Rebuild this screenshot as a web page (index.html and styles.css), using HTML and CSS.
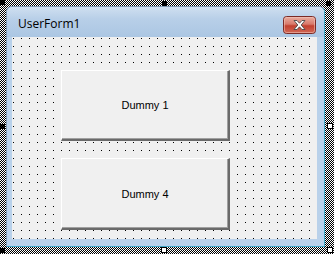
FILE: index.html
```html
<!DOCTYPE html>
<html>
<head>
<meta charset="utf-8">
<link rel="stylesheet" href="styles.css">
</head>
<body>
<div class="sel">
  <div class="form">
    <div class="titlebar">
      <span class="title">UserForm1</span>
      <span class="close">
        <svg width="33" height="18" viewBox="0 0 33 18">
          <defs>
            <linearGradient id="cg" x1="0" y1="0" x2="0" y2="1">
              <stop offset="0" stop-color="#eab0a3"/>
              <stop offset="0.45" stop-color="#d8796b"/>
              <stop offset="0.55" stop-color="#c2402f"/>
              <stop offset="1" stop-color="#d26a58"/>
            </linearGradient>
          </defs>
          <rect x="0.5" y="0.5" width="32" height="17" rx="3" fill="url(#cg)" stroke="#7a2a26"/>
          <rect x="1.5" y="1.5" width="30" height="15" rx="2" fill="none" stroke="#f3c6bc" stroke-opacity="0.55"/>
          <path d="M11 4.5 L14 4.5 L16.5 7.2 L19 4.5 L22 4.5 L18.2 9 L22 13.5 L19 13.5 L16.5 10.8 L14 13.5 L11 13.5 L14.8 9 Z" fill="#ffffff" stroke="#474747" stroke-width="0.9" stroke-linejoin="round"/>
        </svg>
      </span>
    </div>
    <div class="client">
      <div class="btn b1">Dummy 1</div>
      <div class="btn b2">Dummy 4</div>
    </div>
  </div>
  <span class="h blk tl"></span>
  <span class="h blk tm"></span>
  <span class="h blk tr"></span>
  <span class="h blk lm"></span>
  <span class="h blk bl"></span>
  <span class="h wht rm"></span>
  <span class="h wht bm"></span>
  <span class="h wht br"></span>
</div>
</body>
</html>
```
FILE: styles.css
```css
html, body {
  margin: 0;
  padding: 0;
  background: #ffffff;
}
.sel {
  position: relative;
  width: 334px;
  height: 254px;
  box-sizing: border-box;
  padding: 6px 9px 7px 6px;
  background: repeating-conic-gradient(#000 0 25%, #fff 0 50%) 0 0 / 2px 2px;
}
.form {
  width: 319px;
  height: 241px;
  box-sizing: border-box;
  border: 1px solid;
  border-color: #7f98b2 #41a7c8 #41a7c8 #7f98b2;
  border-radius: 6px 6px 0 0;
  background: #b9d1ea;
  display: flex;
  flex-direction: column;
}
.titlebar {
  height: 30px;
  flex: none;
  display: flex;
  align-items: flex-start;
  justify-content: space-between;
  padding: 0 8px 0 11px;
  border-radius: 5px 5px 0 0;
  background: linear-gradient(to bottom, #cfdff0 0%, #b8cfe8 40%, #abc6e3 100%);
}
.title {
  font-family: "Open Sans", "Noto Sans", sans-serif;
  font-size: 12px;
  line-height: 16px;
  color: #000;
  padding-top: 9px;
}
.close {
  display: block;
  width: 33px;
  height: 18px;
  margin-top: 9px;
}
.close svg {
  display: block;
}
.client {
  flex: 1;
  margin: 0 7px 7px 5px;
  background-color: #f0f0f0;
  background-image: conic-gradient(at 1px 1px, transparent 75%, #000 0);
  background-size: 8px 8px;
  background-position: 1px 1px;
  display: flex;
  flex-direction: column;
  align-items: flex-start;
  padding: 33px 0 0 49px;
  gap: 17px;
}
.btn {
  box-sizing: border-box;
  width: 169px;
  background: #f0f0f0;
  border-style: solid;
  border-width: 1px 2px 2px 1px;
  border-color: #ffffff #6a6a6a #6a6a6a #ffffff;
  box-shadow: inset -1px -1px 0 #a0a0a0;
  display: flex;
  align-items: center;
  justify-content: center;
  font-family: "Liberation Sans", Arial, sans-serif;
  font-size: 11px;
  color: #000;
}
.b1 { height: 71px; }
.b2 { height: 72px; }
.h {
  position: absolute;
  box-sizing: border-box;
}
.blk {
  width: 5px;
  height: 5px;
  background: #000;
}
.wht {
  width: 6px;
  height: 6px;
  background: #fff;
  border: 1px solid #000;
}
.tl { left: 0; top: 0; }
.tm { left: 162px; top: 1px; }
.tr { left: 326px; top: 1px; }
.lm { left: 0; top: 124px; }
.bl { left: 0; top: 248px; }
.rm { left: 327px; top: 123px; }
.bm { left: 161px; top: 247px; }
.br { left: 327px; top: 247px; }
```
